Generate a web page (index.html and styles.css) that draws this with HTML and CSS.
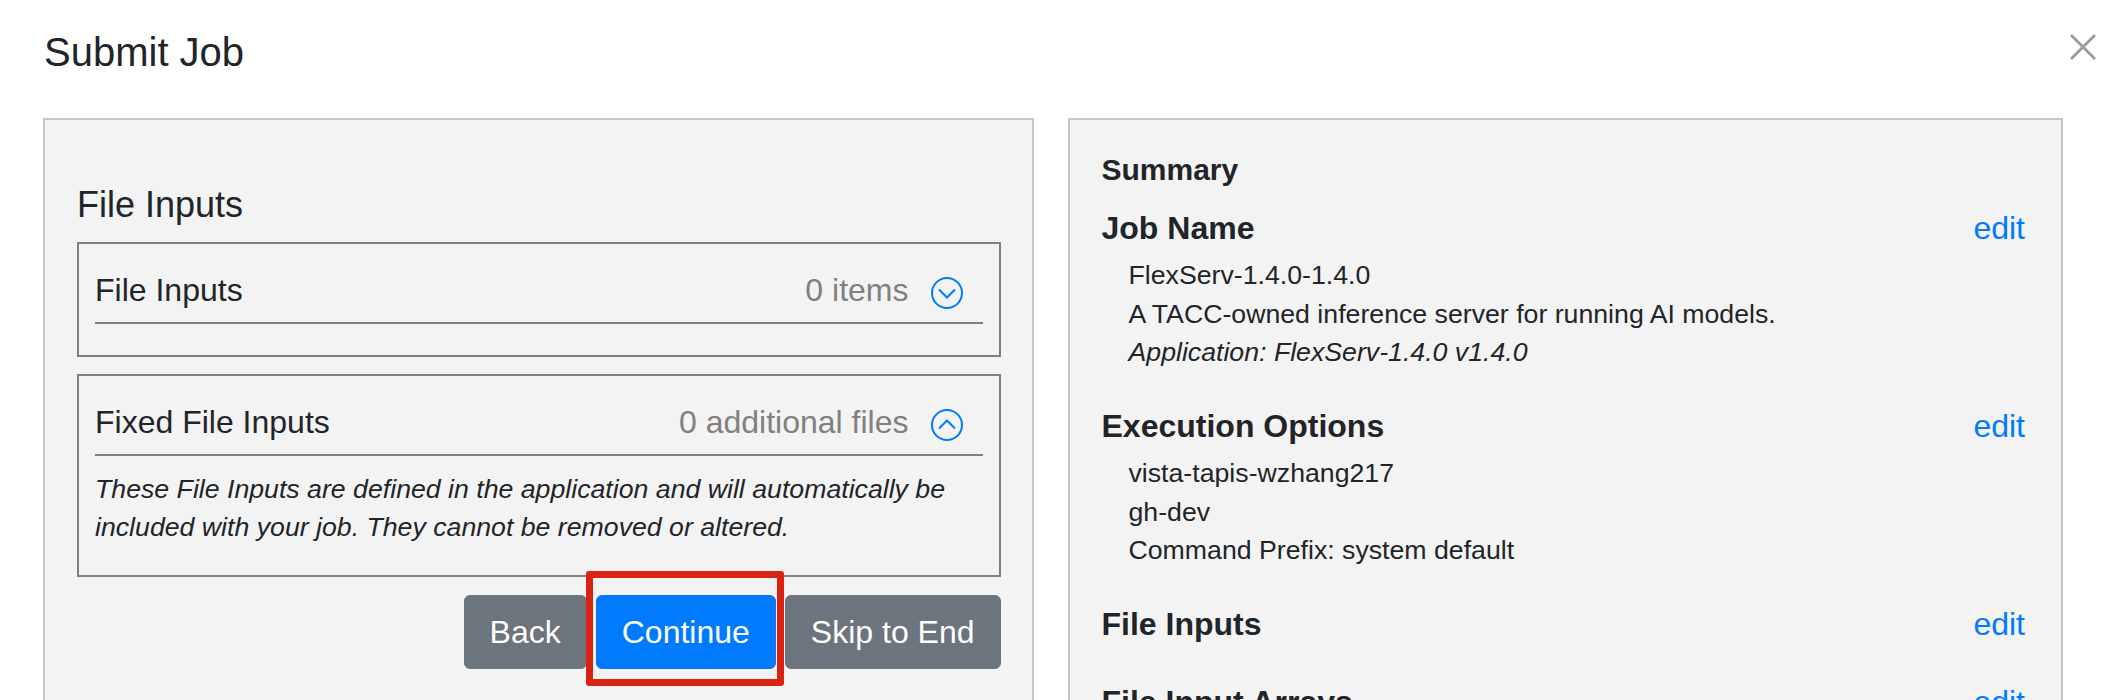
FILE: index.html
```html
<!DOCTYPE html>
<html>
<head>
  <meta charset="utf-8">
  <meta name="viewport" content="width=device-width, initial-scale=1.0">
  <title>Submit Job</title>
  <link rel="stylesheet" href="styles.css">
</head>
<body>
  <div class="modal">
    <div class="modal-header">
      <h1>Submit Job</h1>
      <svg class="close" viewBox="0 0 28 28" aria-label="close">
        <path d="M2 2 L26 26 M26 2 L2 26" />
      </svg>
    </div>

    <div class="modal-body">
      <!-- wizard step -->
      <div class="panel form-panel">
        <h2>File Inputs</h2>

        <div class="collapse-box">
          <div class="collapse-head">
            <span class="collapse-title">File Inputs</span>
            <span class="collapse-count">0 items</span>
            <svg class="toggle" viewBox="0 0 32 32">
              <circle cx="16" cy="16" r="15" />
              <polyline points="8,12.5 16,20.5 24,12.5" />
            </svg>
          </div>
        </div>

        <div class="collapse-box">
          <div class="collapse-head">
            <span class="collapse-title">Fixed File Inputs</span>
            <span class="collapse-count">0 additional files</span>
            <svg class="toggle" viewBox="0 0 32 32">
              <circle cx="16" cy="16" r="15" />
              <polyline points="8,19.5 16,11.5 24,19.5" />
            </svg>
          </div>
          <p class="collapse-note">These File Inputs are defined in the application and will automatically be included with your job. They cannot be removed or altered.</p>
        </div>

        <div class="actions">
          <button class="btn btn-secondary">Back</button>
          <button class="btn btn-primary highlight">Continue</button>
          <button class="btn btn-secondary">Skip to End</button>
        </div>
      </div>

      <!-- summary -->
      <div class="panel summary-panel">
        <h3>Summary</h3>

        <div class="section">
          <div class="section-head">
            <span class="section-title">Job Name</span>
            <a class="edit" href="#">edit</a>
          </div>
          <ul class="section-list">
            <li>FlexServ-1.4.0-1.4.0</li>
            <li>A TACC-owned inference server for running AI models.</li>
            <li><em>Application: FlexServ-1.4.0 v1.4.0</em></li>
          </ul>
        </div>

        <div class="section">
          <div class="section-head">
            <span class="section-title">Execution Options</span>
            <a class="edit" href="#">edit</a>
          </div>
          <ul class="section-list">
            <li>vista-tapis-wzhang217</li>
            <li>gh-dev</li>
            <li>Command Prefix: system default</li>
          </ul>
        </div>

        <div class="section">
          <div class="section-head">
            <span class="section-title">File Inputs</span>
            <a class="edit" href="#">edit</a>
          </div>
        </div>

        <div class="section">
          <div class="section-head">
            <span class="section-title">File Input Arrays</span>
            <a class="edit" href="#">edit</a>
          </div>
        </div>
      </div>
    </div>
  </div>
</body>
</html>
```

FILE: styles.css
```css
/* reset */
* {
  margin: 0; padding: 0;
  box-sizing: border-box; }
html, body {
  height: 100%;
  overflow: hidden; }
body {
  font-family: "Liberation Sans", Arial, sans-serif;
  color: #212529;
  background: #fff; }

/* header */
.modal-header {
  display: flex;
  justify-content: space-between;
  align-items: flex-start;
  height: 118px;
  padding: 28px 21px 0 44px; }
.modal-header h1 {
  font-size: 40px;
  font-weight: normal;
  line-height: 48px; }
.close {
  width: 28px; height: 28px;
  margin-top: 5px; }
.close path {
  stroke: #9a9a9a;
  stroke-width: 2.8;
  fill: none; }

/* two columns */
.modal-body {
  display: flex;
  gap: 34px;
  height: 700px;
  padding: 0 55px 0 43px; }
.panel {
  flex: 1;
  background: #f3f3f3;
  border: 2px solid #c6c6c6;
  border-bottom: none; }

/* left: wizard step */
.form-panel {
  padding: 64px 31px 0 32px; }
.form-panel h2 {
  font-size: 36px;
  font-weight: normal;
  line-height: 42px;
  margin-bottom: 16px; }
.collapse-box {
  border: 2px solid #808080;
  padding: 0 16px 31px; }
.collapse-box + .collapse-box {
  margin-top: 17px; }
.collapse-head {
  display: flex;
  align-items: center;
  padding: 22px 20px 8px 0;
  border-bottom: 2px solid #808080;
  font-size: 32px;
  line-height: 48px; }
.collapse-title { flex: 1; }
.collapse-count { color: #808080; }
.toggle {
  width: 32px; height: 32px;
  margin: 6px 0 0 22px; }
.toggle circle, .toggle polyline {
  fill: none;
  stroke: #007bff;
  stroke-width: 2; }
.collapse-note {
  margin: 14px 0 -3px;
  font-size: 26.7px;
  font-style: italic;
  line-height: 38.4px; }

.actions {
  display: flex;
  justify-content: flex-end;
  gap: 9px;
  margin-top: 18px; }
.btn {
  font-family: inherit;
  font-size: 32px;
  line-height: 48px;
  padding: 12px 25px;
  border: 1px solid transparent;
  border-radius: 6px;
  color: #fff; }
.btn-secondary {
  background: #6c757d;
  border-color: #6c757d; }
.btn-primary {
  background: #007bff;
  border-color: #007bff; }

/* red annotation round the button */
.highlight { position: relative; }
.highlight::after {
  content: "";
  position: absolute;
  left: -11px; right: -9px;
  top: -25px; bottom: -18px;
  border: 7px solid #da2312;
  border-radius: 3px; }

/* right: summary */
.summary-panel {
  padding: 33px 36px 0 32px; }
.summary-panel h3 {
  font-size: 30px;
  line-height: 34.5px;
  margin-bottom: 16px; }
.section { margin-bottom: 30px; }
.section-head {
  display: flex;
  justify-content: space-between;
  font-size: 32px;
  line-height: 48px; }
.section-title { font-weight: bold; }
.edit {
  color: #007bff;
  text-decoration: none; }
.section-list {
  list-style: none;
  margin-top: 4.8px;
  padding-left: 27px;
  font-size: 26.7px;
  line-height: 38.4px; }
```
